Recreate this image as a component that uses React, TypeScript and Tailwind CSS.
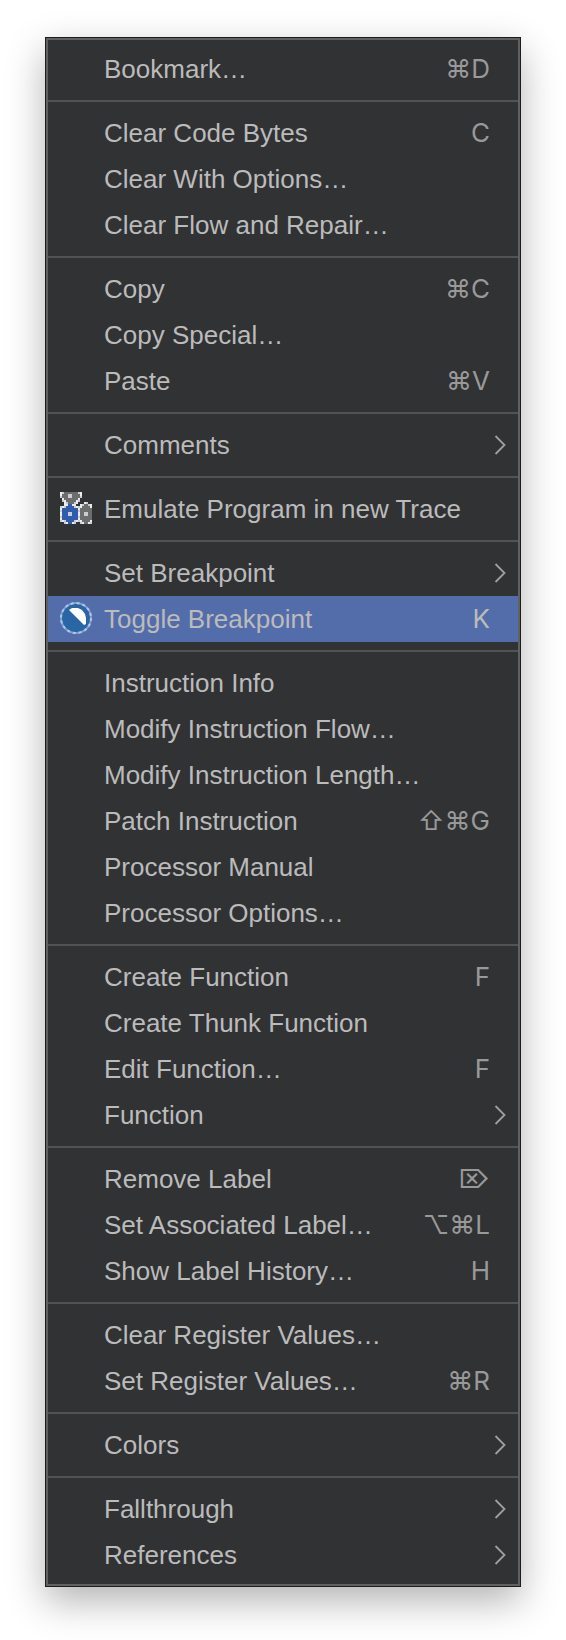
import React from "react";

type Item = {
  label: string;
  keys?: string;
  submenu?: boolean;
  icon?: "emulate" | "breakpoint";
  active?: boolean;
};

const groups: Item[][] = [
  [{ label: "Bookmark…", keys: "⌘D" }],
  [
    { label: "Clear Code Bytes", keys: "C" },
    { label: "Clear With Options…" },
    { label: "Clear Flow and Repair…" },
  ],
  [{ label: "Copy", keys: "⌘C" }, { label: "Copy Special…" }, { label: "Paste", keys: "⌘V" }],
  [{ label: "Comments", submenu: true }],
  [{ label: "Emulate Program in new Trace", icon: "emulate" }],
  [
    { label: "Set Breakpoint", submenu: true },
    { label: "Toggle Breakpoint", keys: "K", icon: "breakpoint", active: true },
  ],
  [
    { label: "Instruction Info" },
    { label: "Modify Instruction Flow…" },
    { label: "Modify Instruction Length…" },
    { label: "Patch Instruction", keys: "⇧⌘G" },
    { label: "Processor Manual" },
    { label: "Processor Options…" },
  ],
  [
    { label: "Create Function", keys: "F" },
    { label: "Create Thunk Function" },
    { label: "Edit Function…", keys: "F" },
    { label: "Function", submenu: true },
  ],
  [
    { label: "Remove Label", keys: "⌦" },
    { label: "Set Associated Label…", keys: "⌥⌘L" },
    { label: "Show Label History…", keys: "H" },
  ],
  [{ label: "Clear Register Values…" }, { label: "Set Register Values…", keys: "⌘R" }],
  [{ label: "Colors", submenu: true }],
  [
    { label: "Fallthrough", submenu: true },
    { label: "References", submenu: true },
  ],
];

// Pixel rows of the gears icon: W white, L light grey, G grey, B blue.
const gearRows = [
  "WLGGGGGGGLW.....",
  "WGGGLLGGGGW.....",
  "LGGGLLGGGGL.....",
  ".WGGGGGGGW......",
  ".LWGGGGGWL......",
  "..WLGGGLW...WL..",
  "..WWBBWW..WLGGLW",
  "LWLBBBBLWLWGGGGW",
  "WBBBBBBBBWGGGGGG",
  "LBBBBBBBBLGGGGGG",
  "WBBBLLBBBWGGLLGG",
  "WBBBLLBBBWGGLLGG",
  "LBBBBBBBBLGGGGGG",
  "WBBBBBBBBWGGGGGG",
  "LWLBBBBLWLWGGGGW",
  "..LWBBWL..LWGGWL",
];

const gearFill: Record<string, string> = { W: "#ececec", L: "#c9ccd2", G: "#6d6d6d", B: "#2f5cab" };

function EmulateIcon() {
  return (
    <svg viewBox="0 0 16 16" className="size-8" shapeRendering="crispEdges" aria-hidden="true">
      {gearRows.flatMap((row, y) =>
        row.split("").map((c, x) =>
          c === "." ? null : <rect key={`${x}-${y}`} x={x} y={y} width="1" height="1" fill={gearFill[c]} />,
        ),
      )}
    </svg>
  );
}

function BreakpointIcon() {
  return (
    <svg viewBox="0 0 32 32" className="size-8" aria-hidden="true">
      <circle cx="16" cy="16" r="15" fill="#2866a6" stroke="#7f9fce" strokeWidth="2" />
      <circle cx="16" cy="16" r="15" fill="none" stroke="#b4c6e0" strokeWidth="2" strokeDasharray="3 2.9" />
      <path d="M9 8 L12 6 H18 L22 8 L25 12 L26 16 V22 L24 23 Z" fill="#fff" />
    </svg>
  );
}

function Chevron() {
  return (
    <svg viewBox="0 0 12 20" className="h-5 w-3" fill="none" stroke="#a0a0a0" strokeWidth="1.8" aria-hidden="true">
      <path d="M1.5 1 L10.5 10 L1.5 19" />
    </svg>
  );
}

function MenuRow({ item }: { item: Item }) {
  return (
    <button
      type="button"
      role="menuitem"
      aria-haspopup={item.submenu ? "menu" : undefined}
      className={`flex h-[46px] w-full items-center pl-3 text-left ${item.submenu ? "pr-3" : "pr-7"} ${
        item.active ? "bg-[#536dab]" : "hover:bg-[#536dab]"
      }`}
    >
      <span className="mr-3 mb-0.5 flex h-8 w-8 shrink-0 items-center">
        {item.icon === "emulate" && <EmulateIcon />}
        {item.icon === "breakpoint" && <BreakpointIcon />}
      </span>
      <span className="flex-1 whitespace-nowrap">{item.label}</span>
      {item.keys && (
        <span className={`font-[Inter,'DejaVu_Sans',sans-serif] ${item.active ? "" : "text-[#999999]"}`}>
          {item.keys}
        </span>
      )}
      {item.submenu && <Chevron />}
    </button>
  );
}

export default function App() {
  return (
    <main className="min-h-screen bg-white pt-[37px] pr-[45px] pb-[53px] pl-[45px]">
      <div
        role="menu"
        className="border border-[#1c1c1d] shadow-[0_14px_36px_rgba(0,0,0,0.3)]"
      >
        <div className="border-2 border-[#5f6162] bg-[#313234] py-1.5 font-['Liberation_Sans',Arial,sans-serif] text-[26px] leading-[30px] text-[#bbbbbb]">
          {groups.map((group, i) => (
            <React.Fragment key={i}>
              {i > 0 && <hr className="my-2 border-t-2 border-[#515355]" />}
              {group.map((item) => (
                <MenuRow key={item.label} item={item} />
              ))}
            </React.Fragment>
          ))}
        </div>
      </div>
    </main>
  );
}
